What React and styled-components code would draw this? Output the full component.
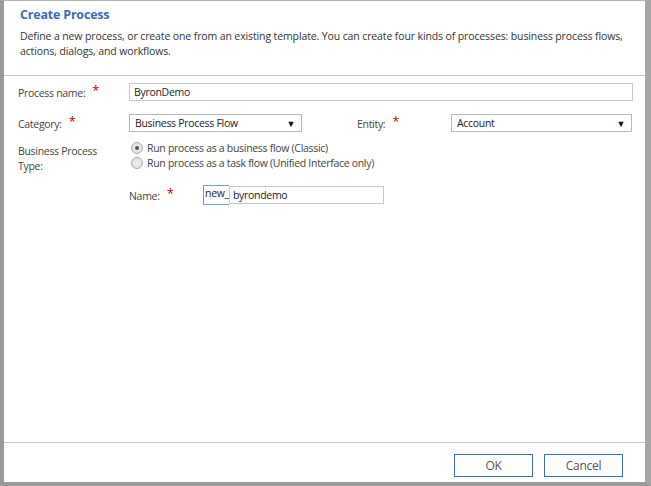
import React from 'react'
import styled, { createGlobalStyle } from 'styled-components'

const GlobalStyle = createGlobalStyle`
    html, body {
        margin: 0;
        padding: 0;
        overflow: hidden;
        background: #fff;
    }
    body {
        font-family: "Open Sans", "Noto Sans", sans-serif;
        font-size: 10.5px;
        letter-spacing: -0.3px;
        color: #333;
    }
`

const App = () => {
    return (
        <>
            <GlobalStyle />
            <Frame>
                <Header>
                    <Title>Create Process</Title>
                    <Description>
                        Define a new process, or create one from an existing template. You can create four kinds of processes: business process flows, actions, dialogs, and workflows.
                    </Description>
                </Header>
                <Form>
                    <WideRow>
                        <Label>Process name:<Required>*</Required></Label>
                        <TextBox>ByronDemo</TextBox>
                    </WideRow>
                    <SplitRow>
                        <Label>Category:<Required>*</Required></Label>
                        <Select>
                            <span>Business Process Flow</span>
                            <Arrow>▼</Arrow>
                        </Select>
                        <span />
                        <Label>Entity:<Required>*</Required></Label>
                        <Select>
                            <span>Account</span>
                            <Arrow>▼</Arrow>
                        </Select>
                    </SplitRow>
                    <TypeRow>
                        <TypeLabel>Business Process<br />Type:</TypeLabel>
                        <Options>
                            <Option>
                                <Radio checked />
                                Run process as a business flow (Classic)
                            </Option>
                            <Option>
                                <Radio />
                                Run process as a task flow (Unified Interface only)
                            </Option>
                        </Options>
                    </TypeRow>
                    <NameRow>
                        <NameLabel>Name:<Required>*</Required></NameLabel>
                        <Prefix>new_</Prefix>
                        <NameBox>byrondemo</NameBox>
                    </NameRow>
                </Form>
                <Footer>
                    <Button>OK</Button>
                    <Button>Cancel</Button>
                </Footer>
            </Frame>
        </>
    )
}

const Frame = styled.div`
    width: 651px;
    height: 486px;
    box-sizing: border-box;
    display: flex;
    flex-direction: column;
    background: #fff;
    border-top: 1px solid #b4b4b4;
    border-left: 4px solid #9a9a9a;
    border-right: 6px solid #a6a6a6;
    border-bottom: 4px solid #9a9a9a;
`

const Header = styled.div`
    height: 75px;
    box-sizing: border-box;
    padding: 5px 16px 0 16px;
    border-bottom: 1px solid #c4c4c4;
`

const Title = styled.div`
    font-size: 12.5px;
    font-weight: 700;
    letter-spacing: -0.2px;
    color: #3b6cb4;
    line-height: 18px;
`

const Description = styled.div`
    margin-top: 5px;
    line-height: 15px;
    letter-spacing: -0.12px;
    color: #333;
`

const Form = styled.div`
    flex: 1;
    padding: 7px 12px 0 14px;
    display: flex;
    flex-direction: column;
`

const WideRow = styled.div`
    display: grid;
    grid-template-columns: 111px 1fr;
    align-items: center;
    height: 18px;
`

const SplitRow = styled.div`
    display: grid;
    grid-template-columns: 111px 173px 55px 94px 181px;
    align-items: center;
    height: 18px;
    margin-top: 13px;
`

const Label = styled.div`
    color: #444;
    white-space: nowrap;
`

const Required = styled.span`
    color: #c00000;
    font-size: 13px;
    margin-left: 7px;
    position: relative;
    top: -2px;
`

const TextBox = styled.div`
    height: 18px;
    box-sizing: border-box;
    border: 1px solid #c8c8c8;
    padding: 0 4px;
    line-height: 16px;
    color: #222;
`

const Select = styled.div`
    height: 18px;
    box-sizing: border-box;
    border: 1px solid #b8b8b8;
    padding: 0 6px 0 5px;
    display: flex;
    align-items: center;
    justify-content: space-between;
    color: #222;
`

const Arrow = styled.span`
    font-size: 9px;
    color: #111;
`

const TypeRow = styled.div`
    display: grid;
    grid-template-columns: 111px 1fr;
    margin-top: 8px;
`

const TypeLabel = styled.div`
    color: #444;
    line-height: 15px;
    padding-top: 4px;
`

const Options = styled.div`
    display: flex;
    flex-direction: column;
    padding-left: 2px;
`

const Option = styled.div`
    display: flex;
    align-items: center;
    gap: 4px;
    height: 15px;
    color: #444;
`

const Radio = styled.span`
    width: 12px;
    height: 12px;
    box-sizing: border-box;
    border-radius: 50%;
    border: 1px solid #aaa;
    background: radial-gradient(circle, #eee 0%, #dcdcdc 100%);
    display: flex;
    align-items: center;
    justify-content: center;

    &::after {
        content: '';
        width: 4px;
        height: 4px;
        border-radius: 50%;
        background: ${(p) => (p.checked ? '#555' : 'transparent')};
    }
`

const NameRow = styled.div`
    display: flex;
    align-items: center;
    margin-left: 111px;
    margin-top: 11px;
`

const NameLabel = styled(Label)`
    width: 74px;
`

const Prefix = styled.div`
    width: 26px;
    height: 20px;
    box-sizing: border-box;
    border: 1px solid #7d9cc4;
    border-right: none;
    line-height: 14px;
    color: #222;
    padding-left: 1px;
`

const NameBox = styled(TextBox)`
    width: 155px;
    padding-left: 3px;
`

const Footer = styled.div`
    display: flex;
    justify-content: flex-end;
    gap: 11px;
    border-top: 1px solid #c4c4c4;
    padding: 11px 22px 0 0;
    height: 40px;
    box-sizing: border-box;
`

const Button = styled.div`
    width: 79px;
    height: 23px;
    box-sizing: border-box;
    border: 1px solid #3d6fa8;
    display: flex;
    align-items: center;
    justify-content: center;
    font-size: 12px;
    color: #555;
    background: #fff;
`

export default App
